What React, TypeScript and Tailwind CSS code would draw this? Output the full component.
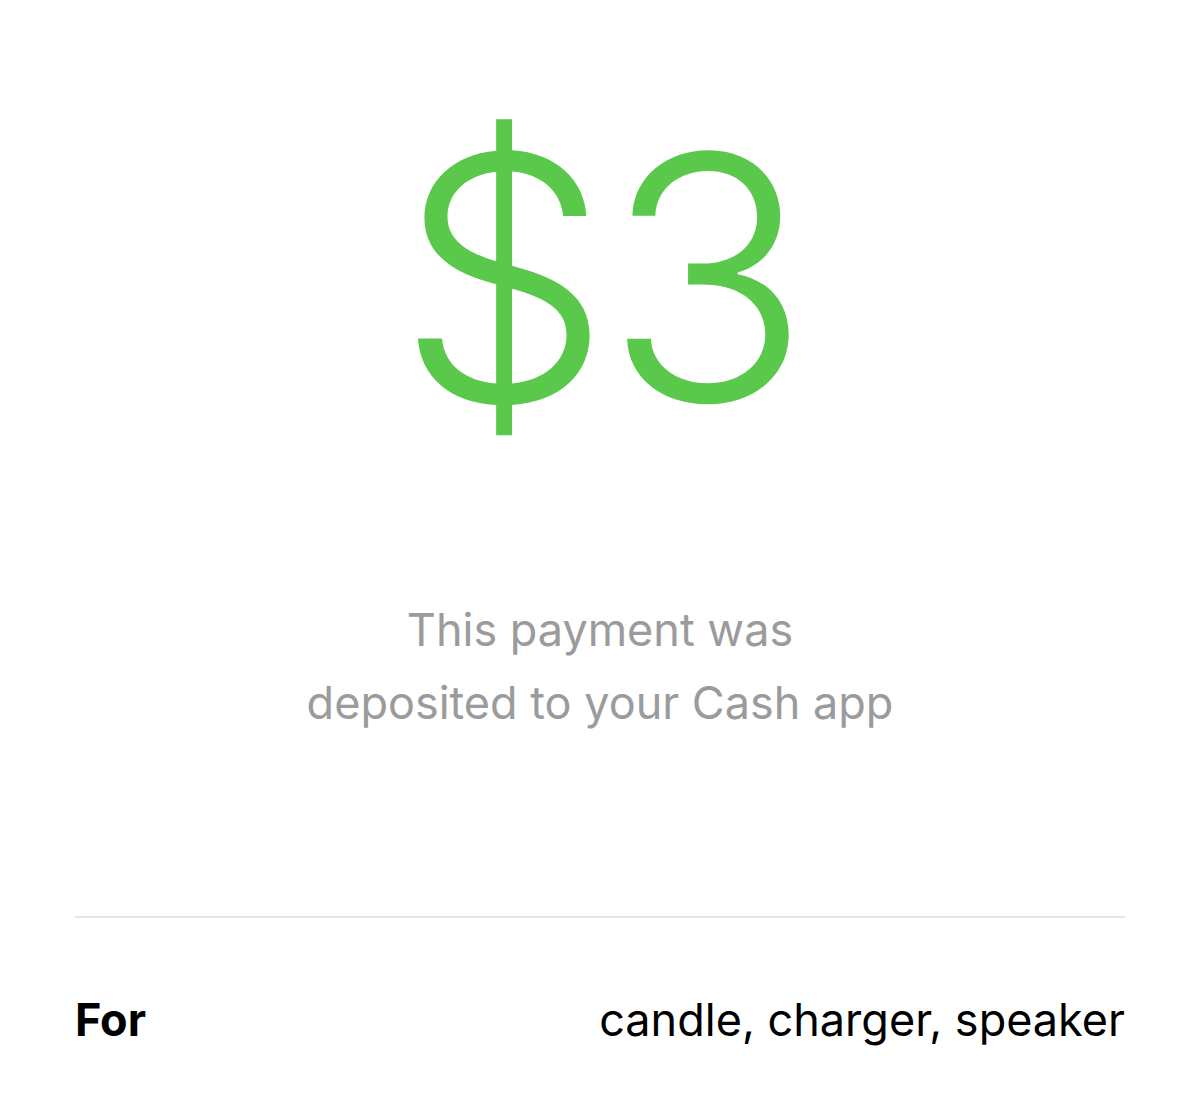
export default function App() {
  return (
    <div className="w-[1200px] h-[1111px] bg-white flex flex-col items-center overflow-hidden" style={{ fontFamily: 'Inter, "Noto Sans", sans-serif' }}>
      <div className="mt-[103px] h-[350px] flex items-center justify-center">
        <span className="text-[340px] leading-none font-light tracking-[-0.02em] text-[#5ac84b]">$3</span>
      </div>
      <div className="mt-[140px] text-center text-[45px] leading-[73px] text-[#9b9b9b]">
        <p>This payment was</p>
        <p>deposited to your Cash app</p>
      </div>
      <div className="mt-[177px] w-[1050px] h-[2px] bg-[#e6e6e6]" />
      <div className="mt-[68px] w-[1050px] flex items-center justify-between text-[45px] text-black">
        <span className="font-bold">For</span>
        <span>candle, charger, speaker</span>
      </div>
    </div>
  );
}
